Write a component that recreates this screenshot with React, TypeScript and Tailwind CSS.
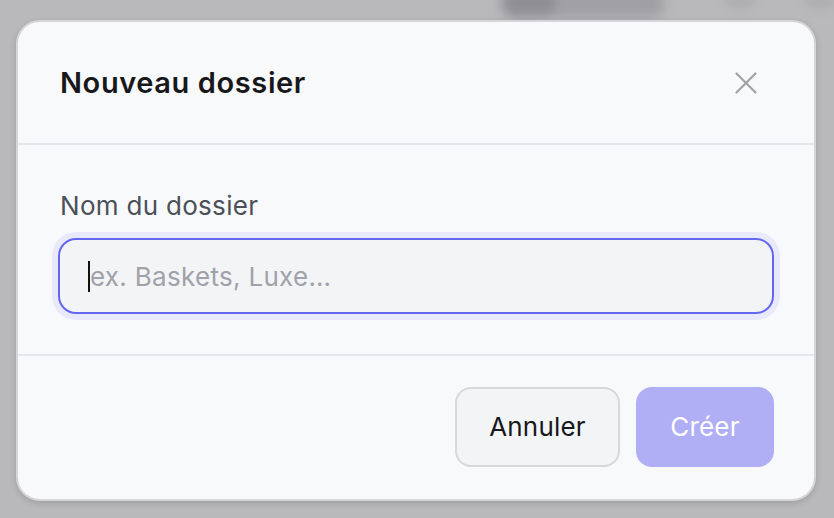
import React from "react";

export default function App() {
  return (
    <div className="relative w-[834px] h-[518px] overflow-hidden bg-[#b9b9bb]" style={{ fontFamily: "Inter, 'Noto Sans', sans-serif" }}>
      <div className="absolute left-[500px] top-[-12px] w-[165px] h-[30px] rounded-full bg-[#a09fa4] blur-[6px]" />
      <div className="absolute left-[505px] top-[-8px] w-[50px] h-[22px] rounded-full bg-[#8f8e94] blur-[5px]" />
      <div className="absolute left-[725px] top-[-6px] w-[30px] h-[14px] rounded-full bg-[#adadb0] blur-[5px]" />
      <div className="absolute left-[805px] top-[-6px] w-[30px] h-[14px] rounded-full bg-[#adadb0] blur-[5px]" />
      <div className="relative pt-[20px] pl-[16px]">
        <div className="w-[800px] h-[481px] flex flex-col rounded-[24px] border-2 border-[#d6d6d9] bg-[#f8f9fb] shadow-[0_2px_6px_rgba(0,0,0,0.15)]">
          <div className="h-[123px] flex items-center justify-between pl-[42px] pr-[57px] border-b-2 border-[#e6e7ea]">
            <h2 className="text-[29px] font-semibold text-[#18181b] tracking-[0.6px]">Nouveau dossier</h2>
            <svg width="22" height="22" viewBox="0 0 22 22" fill="none" stroke="#9fa2a8" strokeWidth="2.2" strokeLinecap="round">
              <path d="M1.5 1.5L20.5 20.5M20.5 1.5L1.5 20.5" />
            </svg>
          </div>
          <div className="h-[211px] px-[40px] pt-[41px] border-b-2 border-[#e6e7ea]">
            <div className="text-[26px] leading-[39px] text-[#4b5058] pl-[2px] tracking-[0.3px]">Nom du dossier</div>
            <div className="mt-[13px] h-[76px] rounded-[18px] border-2 border-[#6366f1] bg-[#f3f4f6] shadow-[0_0_0_6px_#e8e9fb] flex items-center pl-[28px]">
              <div className="w-[2px] h-[31px] bg-[#111]" />
              <span className="text-[26px] text-[#a1a1aa] tracking-[0.3px]">ex. Baskets, Luxe…</span>
            </div>
          </div>
          <div className="flex-1 flex items-center justify-end gap-[16px] px-[40px] pb-[2px]">
            <button className="w-[165px] h-[80px] rounded-[16px] border-2 border-[#d8d8db] bg-[#f3f4f6] text-[26px] text-[#18181b] tracking-[0.2px]">Annuler</button>
            <button className="w-[138px] h-[80px] rounded-[16px] bg-[#b0aff5] text-[26px] text-white tracking-[0.2px]">Créer</button>
          </div>
        </div>
      </div>
    </div>
  );
}
